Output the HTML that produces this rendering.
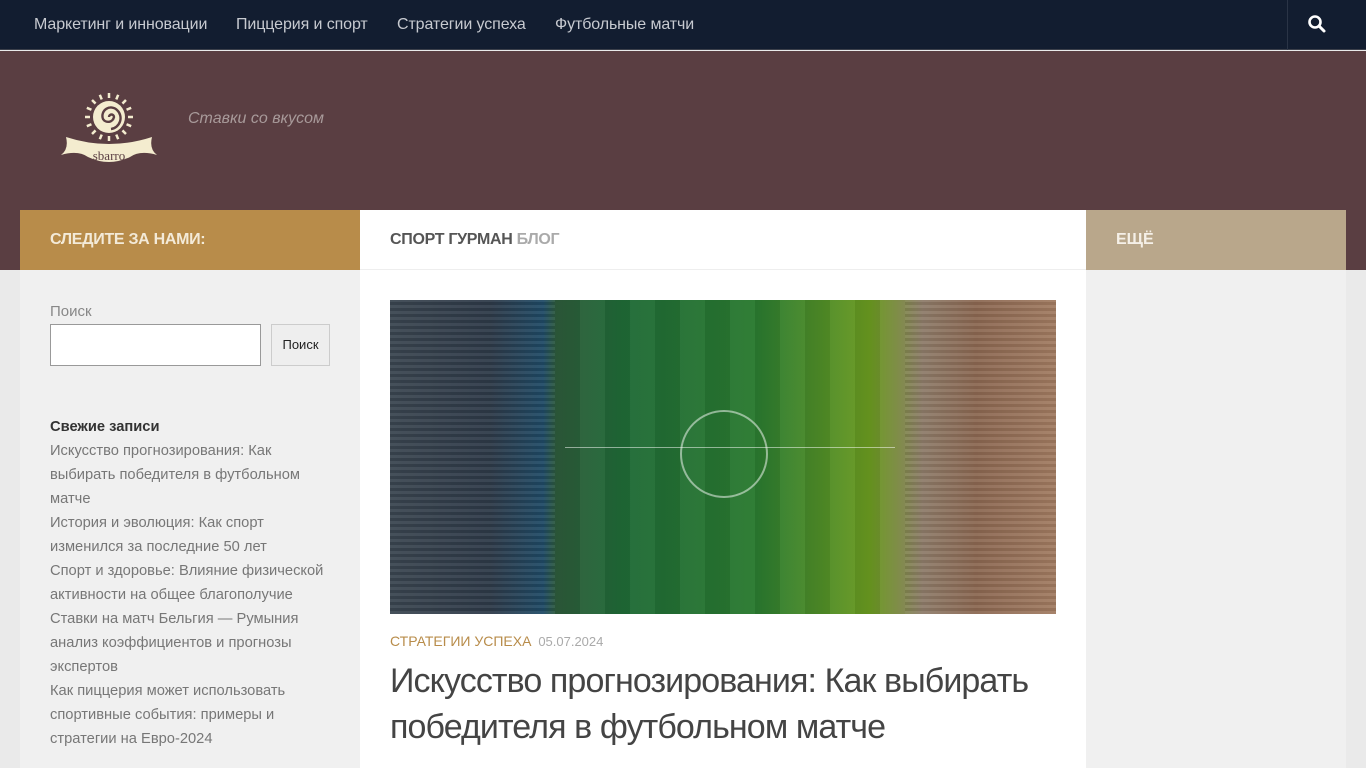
<!DOCTYPE html>
<html><head><meta charset="utf-8"><style>
*{margin:0;padding:0;box-sizing:border-box}
body{width:1366px;height:768px;overflow:hidden;background:#eaeaea;font-family:"Liberation Sans",sans-serif;position:relative}
.nav{position:absolute;top:0;left:0;width:1366px;height:50px;background:#121d30;border-bottom:1px solid #3a3f4a}
.nav a{position:absolute;top:16px;color:#c7cad0;font-size:16px;text-decoration:none;letter-spacing:-0.1px}
.srch{position:absolute;left:1287px;top:0;width:1px;height:50px;background:#2a3446}
.head{position:absolute;top:51px;left:0;width:1366px;height:219px;background:#5a3e42}
.tag{position:absolute;left:188px;top:59px;color:#a89a9a;font-style:italic;font-size:16px}
.col{position:absolute;top:210px}
.lh{left:20px;width:340px;height:60px;background:#b88c4a;color:#f3ead8;font-weight:bold;font-size:16px;padding:21px 30px;letter-spacing:-0.3px}
.mh{left:360px;width:726px;height:60px;background:#fff;border-bottom:1px solid #eee;font-weight:bold;font-size:16px;padding:21px 30px;color:#555;letter-spacing:-0.3px}
.rh{left:1086px;width:260px;height:60px;background:#b9a78b;color:#f5f0e8;font-weight:bold;font-size:16px;padding:21px 30px}
.lb{left:20px;top:270px;width:340px;height:498px;background:#f0f0f0}
.mb{left:360px;top:270px;width:726px;height:498px;background:#fff}
.rb{left:1086px;top:270px;width:260px;height:498px;background:#f0f0f0}
.lb p{font-size:14.7px;color:#777;line-height:24px}
</style></head><body>
<div class="nav">
<a style="left:34px">Маркетинг и инновации</a>
<a style="left:236px">Пиццерия и спорт</a>
<a style="left:397px">Стратегии успеха</a>
<a style="left:555px">Футбольные матчи</a>
<div class="srch"></div>
<svg style="position:absolute;left:1307px;top:14px" width="20" height="20" viewBox="0 0 20 20"><circle cx="8" cy="8" r="5.5" fill="none" stroke="#fff" stroke-width="2.6"/><path d="M12 12l5 5" stroke="#fff" stroke-width="3" stroke-linecap="round"/></svg>
</div>
<div class="head">
<svg style="position:absolute;left:60px;top:42px" width="100" height="76" viewBox="0 0 100 76">
<g stroke="#f4eccf" stroke-width="2.5" transform="translate(49,24)">
<g id="r"><line x1="0" y1="-24" x2="0" y2="-19"/></g>
<use href="#r" transform="rotate(22.5)"/><use href="#r" transform="rotate(45)"/><use href="#r" transform="rotate(67.5)"/><use href="#r" transform="rotate(90)"/><use href="#r" transform="rotate(112.5)"/><use href="#r" transform="rotate(135)"/><use href="#r" transform="rotate(157.5)"/><use href="#r" transform="rotate(180)"/><use href="#r" transform="rotate(202.5)"/><use href="#r" transform="rotate(225)"/><use href="#r" transform="rotate(247.5)"/><use href="#r" transform="rotate(270)"/><use href="#r" transform="rotate(292.5)"/><use href="#r" transform="rotate(315)"/><use href="#r" transform="rotate(337.5)"/>
</g>
<circle cx="49" cy="24" r="16" fill="#f4eccf"/>
<path d="M49 24 a2.5 2.5 0 0 1 5 0 a6 6 0 0 1 -11 2 a8.5 8.5 0 0 1 14 -9 a11 11 0 0 1 -6 19" fill="none" stroke="#5a3e42" stroke-width="2.4"/>
<path d="M1 62 Q9 56 6 44 Q49 58 92 44 Q89 56 97 62 Q80 57 70 64 Q49 74 28 64 Q18 57 1 62Z" fill="#f4eccf"/>
<text x="49" y="67" font-family="Liberation Serif,serif" font-size="13" fill="#5a3e42" text-anchor="middle">sbarro</text>
</svg>
<div class="tag">Ставки со вкусом</div>
</div>
<div class="col lh">СЛЕДИТЕ ЗА НАМИ:</div>
<div class="col mh">СПОРТ ГУРМАН <span style="color:#aaa">БЛОГ</span></div>
<div class="col rh">ЕЩЁ</div>
<div class="col lb">
<div style="position:absolute;left:30px;top:33px;font-size:15px;color:#888">Поиск</div>
<div style="position:absolute;left:30px;top:54px;width:211px;height:42px;background:#fff;border:1px solid #999"></div>
<div style="position:absolute;left:251px;top:54px;width:59px;height:42px;background:#eee;border:1px solid #ccc;font-size:13px;color:#222;text-align:center;line-height:40px">Поиск</div>
<div style="position:absolute;left:30px;top:145px;width:285px">
<p style="color:#333;font-weight:bold">Свежие записи</p>
<p>Искусство прогнозирования: Как выбирать победителя в футбольном матче</p>
<p>История и эволюция: Как спорт изменился за последние 50 лет</p>
<p>Спорт и здоровье: Влияние физической активности на общее благополучие</p>
<p>Ставки на матч Бельгия — Румыния анализ коэффициентов и прогнозы экспертов</p>
<p>Как пиццерия может использовать спортивные события: примеры и стратегии на Евро-2024</p>
</div>
</div>
<div class="col mb">
<div style="position:absolute;left:30px;top:30px;width:666px;height:314px;background:linear-gradient(90deg,#3a4550 0%,#2e3a48 15%,#1f4a66 23%,#2d5a3a 25%,#1f6a36 35%,#2a7a30 55%,#6a9a20 72%,#7a8a40 76%,#8c7a68 80%,#8a6650 88%,#a07a60 100%);overflow:hidden">
<div style="position:absolute;left:165px;top:0;width:350px;height:314px;background:repeating-linear-gradient(90deg,rgba(0,0,0,.06) 0 25px,rgba(255,255,255,.03) 25px 50px)"></div>
<div style="position:absolute;left:0;top:0;width:165px;height:314px;background:repeating-linear-gradient(0deg,rgba(255,255,255,.06) 0 3px,rgba(0,0,0,.08) 3px 6px)"></div>
<div style="position:absolute;left:515px;top:0;width:151px;height:314px;background:repeating-linear-gradient(0deg,rgba(255,255,255,.07) 0 3px,rgba(0,0,0,.06) 3px 6px)"></div>
<div style="position:absolute;left:290px;top:110px;width:88px;height:88px;border:2px solid rgba(255,255,255,.5);border-radius:50%"></div>
<div style="position:absolute;left:175px;top:147px;width:330px;height:1px;background:rgba(255,255,255,.5)"></div>
</div>
<div style="position:absolute;left:30px;top:363px;font-size:14px;color:#b88c4a">СТРАТЕГИИ УСПЕХА <span style="color:#aaa;font-size:13px;margin-left:3px">05.07.2024</span></div>
<div style="position:absolute;left:30px;top:388px;width:666px;font-size:34px;line-height:46px;color:#444;letter-spacing:-0.9px">Искусство прогнозирования: Как выбирать победителя в футбольном матче</div>
</div>
<div class="col rb"></div>
</body></html>
